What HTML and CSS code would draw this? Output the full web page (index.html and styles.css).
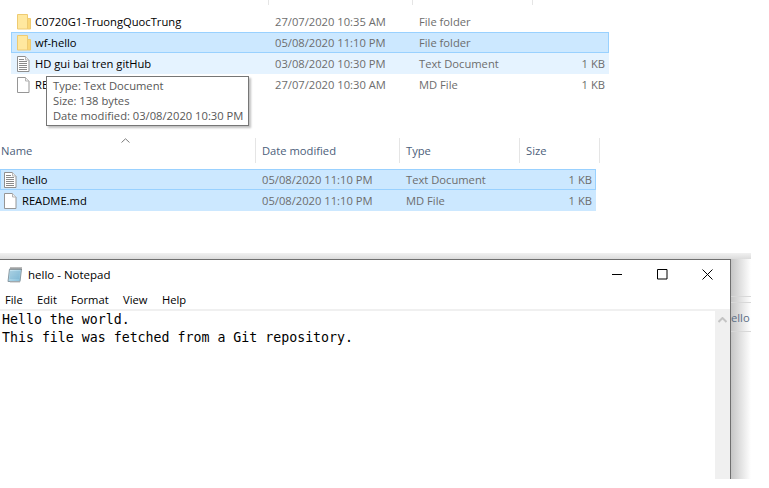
FILE: index.html
```html
<!DOCTYPE html>
<html lang="en">
<head>
<meta charset="utf-8">
<title>Explorer and Notepad</title>
<link rel="stylesheet" href="styles.css">
</head>
<body>
<div class="desk">
  <section class="top-list">
    <div class="ticks"><i class="t1"></i><i class="t2"></i><i class="t3"></i></div>
    <div class="row top">
      <span class="name"><svg class="ico" width="16" height="16" viewBox="0 0 16 16"><use href="#folder"/></svg>C0720G1-TruongQuocTrung</span>
      <span class="date">27/07/2020 10:35 AM</span><span class="type">File folder</span><span class="size"></span>
    </div>
    <div class="row top sel">
      <span class="name"><svg class="ico" width="16" height="16" viewBox="0 0 16 16"><use href="#folder"/></svg>wf-hello</span>
      <span class="date">05/08/2020 11:10 PM</span><span class="type">File folder</span><span class="size"></span>
    </div>
    <div class="row top hov">
      <span class="name"><svg class="ico" width="16" height="16" viewBox="0 0 16 16"><use href="#txt"/></svg>HD gui bai tren gitHub</span>
      <span class="date">03/08/2020 10:30 PM</span><span class="type">Text Document</span><span class="size">1 KB</span>
    </div>
    <div class="row top">
      <span class="name"><svg class="ico" width="16" height="16" viewBox="0 0 16 16"><use href="#doc"/></svg>README.md</span>
      <span class="date">27/07/2020 10:30 AM</span><span class="type">MD File</span><span class="size">1 KB</span>
    </div>
  </section>

  <div class="tip">
    <div>Type: Text Document</div>
    <div>Size: 138 bytes</div>
    <div>Date modified: 03/08/2020 10:30 PM</div>
  </div>

  <section class="bottom-list">
    <div class="head">
      <svg class="sort" width="9" height="5" viewBox="0 0 9 5"><path d="M.5 4.500 4.500.8l4 3.700" fill="none" stroke="#7c7c7c"/></svg>
      <span class="h-name">Name</span><span class="h-date">Date modified</span><span class="h-type">Type</span><span class="h-size">Size</span>
    </div>
    <div class="row low sel">
      <span class="name"><svg class="ico" width="16" height="16" viewBox="0 0 16 16"><use href="#txt"/></svg>hello</span>
      <span class="date">05/08/2020 11:10 PM</span><span class="type">Text Document</span><span class="size">1 KB</span>
    </div>
    <div class="row low sel2">
      <span class="name"><svg class="ico" width="16" height="16" viewBox="0 0 16 16"><use href="#doc"/></svg>README.md</span>
      <span class="date">05/08/2020 11:10 PM</span><span class="type">MD File</span><span class="size">1 KB</span>
    </div>
  </section>

  <div class="behind">
    <div class="behind-text">ello</div>
  </div>

  <section class="notepad">
    <header class="titlebar">
      <svg class="np-ico" width="16" height="17" viewBox="0 0 16 17">
        <defs><linearGradient id="npg" x1="0" y1="0" x2="1" y2="1"><stop offset="0" stop-color="#d3ecf6"/><stop offset="1" stop-color="#7fbbd8"/></linearGradient></defs>
        <path d="M2.500 3h12l-1.500 12.500h-12z" fill="url(#npg)" stroke="#8a9aa3"/>
        <path d="M3 6h10M2.800 8h10M2.600 10h10M2.400 12h10" stroke="#6fa9c6" stroke-opacity=".7"/>
        <path d="M4 1v3M6 1v3M8 1v3M10 1v3M12 1v3M14 1v3" stroke="#777"/>
        <path d="M3 16h10" stroke="#b9b9b9"/>
      </svg>
      <span class="np-title">hello - Notepad</span>
      <span class="ctrls">
        <svg width="11" height="11" viewBox="0 0 11 11"><path d="M0 5.500h10" stroke="#000"/></svg>
        <svg width="11" height="11" viewBox="0 0 11 11"><path d="M.5.500h9.500v9.500h-9.500z" fill="none" stroke="#000"/></svg>
        <svg width="11" height="11" viewBox="0 0 11 11"><path d="M.5.500l10 10M10.500.500l-10 10" stroke="#000"/></svg>
      </span>
    </header>
    <nav class="menu"><span class="m-file">File</span><span class="m-edit">Edit</span><span class="m-format">Format</span><span class="m-view">View</span><span>Help</span></nav>
    <div class="editor">
      <pre class="text">Hello the world.
This file was fetched from a Git repository.</pre>
      <div class="scroll"><svg width="9" height="6" viewBox="0 0 9 6"><path d="M.5 5 4.500 1l4 4" fill="none" stroke="#c4c4c4" stroke-width="2"/></svg></div>
    </div>
  </section>
</div>

<svg class="defs" width="0" height="0">
  <defs>
    <g id="folder">
      <path d="M.5.500h10v14.500h-10z" fill="#ffe89f" stroke="#eecb72"/>
      <path d="M10.500 4.500h3v10.500h-3z" fill="#fbd777" stroke="#eecb72"/>
    </g>
    <g id="doc">
      <path d="M.5.500h8l3.500 3.500v11.500h-11.500z" fill="#fff" stroke="#969696"/>
      <path d="M8.500.5v3.500h3.500" fill="#f2f2f2" stroke="#b4b4b4"/>
    </g>
    <g id="txt">
      <path d="M.5.500h8l3.500 3.500v11.500h-11.500z" fill="#fff" stroke="#8f8f8f"/>
      <path d="M8.500.5v3.500h3.500" fill="#f2f2f2" stroke="#b4b4b4"/>
      <path d="M2 3.500h5M2 5.500h8M2 7.500h8M2 9.500h8M2 11.500h8M2 13.500h8" stroke="#8a8a8a"/>
    </g>
  </defs>
</svg>
</body>
</html>
```
FILE: styles.css
```css
html, body { margin: 0; padding: 0; background: #fff; }
body { width: 769px; height: 488px; overflow: hidden; font-family: "Open Sans", "Noto Sans", "Liberation Sans", sans-serif; font-size: 11.200px; color: #000; }
.desk { position: relative; width: 769px; height: 488px; overflow: hidden; }
.defs { position: absolute; }
.ico { flex: none; }

.top-list { position: absolute; left: 11px; top: 0; width: 602px; }
.ticks { position: relative; height: 11px; }
.ticks i { position: absolute; top: 0; width: 1px; height: 5px; background: #e5e5e5; }
.t1 { left: 257px; } .t2 { left: 401px; } .t3 { left: 521px; }

.row { display: flex; align-items: center; height: 21px; box-sizing: border-box; white-space: nowrap; }
.row .name { display: flex; align-items: center; gap: 2px; color: #000; }
.row .date, .row .type, .row .size { color: #6d6d6d; }
.row .size { text-align: right; }

.top { width: 598px; }
.top .name { width: 264px; padding-left: 6px; box-sizing: border-box; }
.top .date { width: 144px; }
.top .type { width: 118px; }
.top .size { width: 68px; }
.top.sel { background: #cce8ff; border: 1px solid #99d1ff; }
.top.sel .name { padding-left: 5px; width: 263px; }
.top.hov { background: #e5f3ff; }

.tip { position: absolute; left: 46px; top: 76px; width: 203px; height: 50px; box-sizing: border-box; padding: 1px 0 0 6px; background: #fff; border: 1px solid #767676; box-shadow: 2px 2px 2px rgba(0,0,0,.25); color: #575757; line-height: 15px; white-space: nowrap; }

.bottom-list { position: absolute; left: 0; top: 138px; width: 600px; }
.head { position: relative; height: 31px; display: flex; color: #4c607a; line-height: 25px; }
.head span { box-sizing: border-box; padding-left: 1px; height: 25px; border-right: 1px solid #e5e5e5; }
.h-name { width: 256px; }
.h-date { width: 144px; padding-left: 6px !important; }
.h-type { width: 120px; padding-left: 6px !important; }
.h-size { width: 80px; padding-left: 6px !important; }
.sort { position: absolute; left: 121px; top: 0; }

.low { width: 596px; }
.low .name { width: 262px; padding-left: 4px; box-sizing: border-box; }
.low .date { width: 144px; }
.low .type { width: 118px; }
.low .size { width: 68px; }
.low.sel { background: #cce8ff; border: 1px solid #99d1ff; }
.low.sel .name { padding-left: 3px; width: 261px; }
.low.sel2 { background: #cce8ff; }

.behind { position: absolute; left: 0; top: 253px; width: 751px; height: 226px; background: linear-gradient(to bottom, #f1f1f1, #dcdcdc 6px, transparent 6px), linear-gradient(to right, transparent 731px, #c6c6c6 731px, #fff 751px); }
.behind-text { position: absolute; left: 731px; top: 57px; color: #5c6f86; }
.behind::before { content: ""; position: absolute; left: 731px; right: 0; top: 43px; height: 36px; border-top: 1px solid #d8d8d8; border-bottom: 1px solid #d8d8d8; box-sizing: border-box; }
.behind::after { content: ""; position: absolute; left: 731px; right: 0; top: 49px; border-top: 1px solid #d8d8d8; }

.notepad { position: absolute; left: 0; top: 259px; width: 731px; height: 220px; box-sizing: border-box; border-top: 1px solid #6f6f6f; border-right: 1px solid #6f6f6f; background: #fff; display: flex; flex-direction: column; }
.titlebar { display: flex; align-items: center; height: 29px; flex: none; padding-left: 7px; }
.np-title { margin-left: 5px; font-size: 11.500px; }
.ctrls { margin-left: auto; display: flex; gap: 34px; padding-right: 17px; }
.menu { display: flex; height: 20px; align-items: center; padding-left: 5px; flex: none; }
.m-file { width: 32px; } .m-edit { width: 34px; } .m-format { width: 52px; } .m-view { width: 39px; }
.editor { flex: 1; display: flex; border-top: 2px solid #f0f0f0; min-height: 0; }
.text { flex: 1; margin: 0; padding-left: 2px; font-family: "DejaVu Sans Mono", monospace; font-size: 13.250px; line-height: 18px; color: #000; }
.scroll { width: 15px; background: #f0f0f0; display: flex; justify-content: center; padding-top: 6px; align-items: flex-start; }
```
